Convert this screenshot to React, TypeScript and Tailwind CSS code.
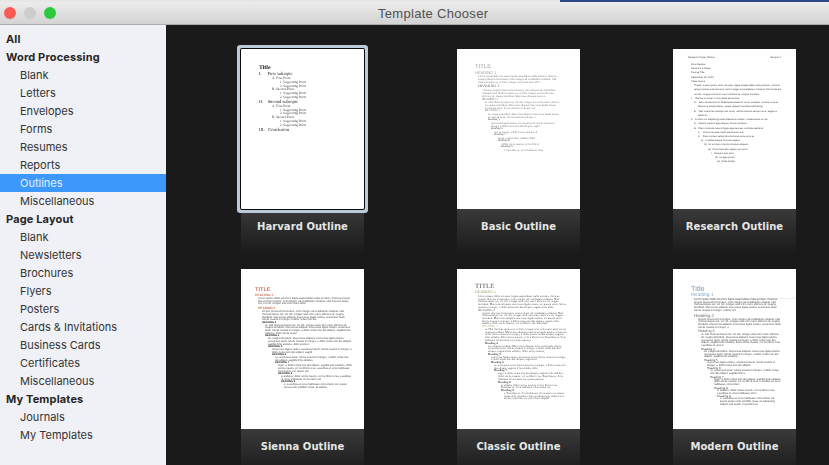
const lorem =
  "Lorem ipsum dolor sit amet, ligula suspendisse nulla pretium, rhoncus tempor placerat fermentum, enim integer ad vestibulum volutpat. Nisl rhoncus turpis est, vel elit, congue wisi enim nunc ultricies sit, magna tincidunt. Maecenas aliquam maecenas ligula nostra, accumsan taciti. Sociis mauris in integer, a dolor netus non dui aliquet, sagittis felis sodales, dolor sociis mauris, vel eu libero cras. Faucibus at. Arcu habitasse elementum est, ipsum purus pede porttitor class, ut adipiscing, aliquet sed auctor, imperdiet arcu per diam dapibus libero duis. Enim eros in vel, volutpat nec pellentesque leo, temporibus scelerisque nec. Ac dolor ac adipiscing amet bibendum nullam, massa lacus molestie ut libero nec, diam et, pharetra sodales eget, feugiat ullamcorper id tempor eget id vitae. Mauris pretium eget aliquet, lectus tincidunt.";

const sidebar = [
  { label: "All", head: true },
  { label: "Word Processing", head: true },
  { label: "Blank" },
  { label: "Letters" },
  { label: "Envelopes" },
  { label: "Forms" },
  { label: "Resumes" },
  { label: "Reports" },
  { label: "Outlines", selected: true },
  { label: "Miscellaneous" },
  { label: "Page Layout", head: true },
  { label: "Blank" },
  { label: "Newsletters" },
  { label: "Brochures" },
  { label: "Flyers" },
  { label: "Posters" },
  { label: "Cards & Invitations" },
  { label: "Business Cards" },
  { label: "Certificates" },
  { label: "Miscellaneous" },
  { label: "My Templates", head: true },
  { label: "Journals" },
  { label: "My Templates" },
];

type DocLine = { text: string; className: string };

const line = (text: string, className: string): DocLine => ({
  text,
  className: `leading-none whitespace-pre ${className}`,
});

// paragraph text cut so it wraps to the given number of lines in the given width
const para = (start: number, lines: number, width: number, charPx: number, className: string): DocLine => ({
  text: lorem.slice(start, start + Math.floor((lines - 0.3) * (width / charPx))),
  className,
});

const SERIF = 1.17;
const SANS = 1.3;

const harvard: DocLine[] = [
  line("Title", "ml-[18px] mt-[17px] h-[6px] text-[5.8px] font-bold text-[#111]"),
  line("I.     First subtopic", "ml-[18px] h-[5px] text-[4.6px] text-[#222]"),
  line("A. First Point", "ml-[31px] h-[4px] text-[3.4px] text-[#333]"),
  line("1. Supporting Point", "ml-[39px] h-[3.7px] text-[3.3px] text-[#333]"),
  line("2. Supporting Point", "ml-[39px] h-[3.7px] text-[3.3px] text-[#333]"),
  line("B. Second Point", "ml-[31px] h-[4px] text-[3.4px] text-[#333]"),
  line("1. Supporting Point", "ml-[39px] h-[3.7px] text-[3.3px] text-[#333]"),
  line("2. Supporting Point", "ml-[39px] h-[3.7px] text-[3.3px] text-[#333]"),
  line("II.    Second subtopic", "ml-[18px] h-[5px] text-[4.6px] text-[#222]"),
  line("A. First Point", "ml-[31px] h-[4px] text-[3.4px] text-[#333]"),
  line("1. Supporting Point", "ml-[39px] h-[3.7px] text-[3.3px] text-[#333]"),
  line("2. Supporting Point", "ml-[39px] h-[3.7px] text-[3.3px] text-[#333]"),
  line("B. Second Point", "ml-[31px] h-[4px] text-[3.4px] text-[#333]"),
  line("1. Supporting Point", "ml-[39px] h-[3.7px] text-[3.3px] text-[#333]"),
  line("2. Supporting Point", "ml-[39px] h-[3.7px] text-[3.3px] text-[#333]"),
  line("III.   Conclusion", "ml-[18px] h-[5px] text-[4.6px] text-[#222]"),
];

const basicBody = "mr-[17px] text-[2.8px] leading-[3px] text-[#666]";

const basic: DocLine[] = [
  line("TITLE", "ml-[18px] mt-[15px] h-[7px] font-['Liberation_Sans',sans-serif] text-[6px] text-[#a0a0a0]"),
  line("HEADING 1", "ml-[18px] h-[4px] font-['Liberation_Sans',sans-serif] text-[4px] text-[#a0a0a0]"),
  para(0, 3, 85, SERIF, `ml-[21px] ${basicBody}`),
  line("HEADING 2", "ml-[21px] h-[5px] text-[4px] text-[#666]"),
  para(60, 3, 81, SERIF, `ml-[25px] ${basicBody}`),
  line("HEADING 3", "ml-[25px] h-[3px] text-[3px] text-[#666]"),
  para(130, 3, 78, SERIF, `ml-[28px] ${basicBody}`),
  line("HEADING 4", "ml-[28px] h-[3px] text-[2.8px] text-[#555]"),
  para(200, 2, 75, SERIF, `ml-[31px] ${basicBody}`),
  line("Heading 5", "ml-[31px] h-[3px] text-[2.8px] text-[#333]"),
  para(240, 2, 72, SERIF, `ml-[34px] ${basicBody}`),
  line("Heading 6", "ml-[34px] h-[3px] text-[2.8px] text-[#333]"),
  para(290, 1, 69, SERIF, `ml-[37px] ${basicBody}`),
  line("Heading 7", "ml-[37px] h-[3px] text-[2.8px] text-[#333]"),
  para(330, 1, 65, SERIF, `ml-[41px] ${basicBody}`),
  line("Heading 8", "ml-[41px] h-[3px] text-[2.8px] text-[#333]"),
  para(360, 1, 62, SERIF, `ml-[44px] ${basicBody}`),
  line("Heading 9", "ml-[44px] h-[3px] text-[2.8px] text-[#333]"),
  para(400, 1, 59, SERIF, `ml-[47px] ${basicBody}`),
];

const researchLine = "h-[4.24px] text-[2.5px] !leading-[4.24px] text-[#444]";

const research: DocLine[] = [
  line("Uma Semper", `ml-[18px] mt-[3px] ${researchLine}`),
  line("Instructor's Name", `ml-[18px] ${researchLine}`),
  line("Course Title", `ml-[18px] ${researchLine}`),
  line("September 30, 2049", `ml-[18px] ${researchLine}`),
  line("Paper Name", `ml-[18px] ${researchLine}`),
  line("Thesis: Lorem ipsum dolor sit amet, ligula suspendisse nulla pretium, rhoncus", `ml-[21px] ${researchLine}`),
  line("tempor placerat fermentum, enim integer ad vestibulum volutpat. Nisl turpis est,", `ml-[21px] ${researchLine}`),
  line("vel elit, congue wisi enim nunc ultricies sit, magna tincidunt.", `ml-[21px] ${researchLine}`),
  line("I.    Outline is written in complete sentences.", `ml-[18px] ${researchLine}`),
  line("A.   Justo fermentum id. Malesuada eleifend, tortor molestie, a fusce a vel et.", `ml-[21px] ${researchLine}`),
  line("Mauris at suspendisse, neque aliquam faucibus adipiscing.", `ml-[25px] ${researchLine}`),
  line("B.   Wisi mattis leo suscipit nec amet, nisl fermentum tempor ac a, augue in", `ml-[21px] ${researchLine}`),
  line("eleifend.", `ml-[25px] ${researchLine}`),
  line("II.   At dolor ac adipiscing amet bibendum nullam, massa lacus ut nisi.", `ml-[18px] ${researchLine}`),
  line("A.   Mauris pretium eget aliquet, lectus tincidunt.", `ml-[21px] ${researchLine}`),
  line("B.   Diam molestie mauris ligula eget laoreet, vehicula eleifend.", `ml-[21px] ${researchLine}`),
  line("1.    Varius natoque turpis elementum est.", `ml-[25px] ${researchLine}`),
  line("2.    Duis montes, tellus lobortis lacus amet arcu et.", `ml-[25px] ${researchLine}`),
  line("a)   In pellentesque rhoncus sapien.", `ml-[28px] ${researchLine}`),
  line("(1)  Ut ut lorem id eros tincidunt aliquam.", `ml-[31px] ${researchLine}`),
  line("(a)  Cras imperdiet sapien nec enim.", `ml-[35px] ${researchLine}`),
  line("i.   Aliquam sed arcu.", `ml-[38px] ${researchLine}`),
  line("(1)  Ut eget purus.", `ml-[42px] ${researchLine}`),
  line("(a)  Nulla facilisi.", `ml-[44px] ${researchLine}`),
];

const siennaBody = "mr-[11px] text-[2.7px] leading-[2.7px] text-[#444]";
const siennaHead = "h-[2.7px] text-[2.6px] font-bold text-[#222]";

const sienna: DocLine[] = [
  line("TITLE", "ml-[14px] mt-[19px] h-[6px] text-[5.6px] font-bold text-[#c9765c]"),
  line("HEADING 1", "ml-[14px] h-[4px] text-[3.4px] font-bold text-[#c9765c]"),
  para(0, 3, 95, SANS, `ml-[17px] ${siennaBody}`),
  line("HEADING 2", "ml-[17px] mt-[1px] h-[4px] text-[3.2px] font-bold text-[#c9765c]"),
  para(70, 4, 91, SANS, `ml-[21px] ${siennaBody}`),
  line("HEADING 3", `ml-[21px] ${siennaHead}`),
  para(130, 4, 88, SANS, `ml-[24px] ${siennaBody}`),
  line("HEADING 4", `ml-[24px] ${siennaHead}`),
  para(200, 3, 85, SANS, `ml-[27px] ${siennaBody}`),
  line("HEADING 5", `ml-[27px] ${siennaHead}`),
  para(240, 2, 81, SANS, `ml-[31px] ${siennaBody}`),
  line("HEADING 6", `ml-[31px] ${siennaHead}`),
  para(260, 2, 78, SANS, `ml-[34px] ${siennaBody}`),
  line("HEADING 7", `ml-[34px] ${siennaHead}`),
  para(300, 3, 75, SANS, `ml-[37px] ${siennaBody}`),
  line("HEADING 8", `ml-[37px] ${siennaHead}`),
  para(350, 2, 72, SANS, `ml-[40px] ${siennaBody}`),
  line("HEADING 9", `ml-[40px] ${siennaHead}`),
  para(400, 2, 69, SANS, `ml-[43px] ${siennaBody}`),
];

const classicBody = "mr-[13px] text-[2.9px] leading-[2.7px] text-[#444]";
const classicHead = "h-[3px] text-[2.9px] font-bold text-[#444]";

const classic: DocLine[] = [
  line("TITLE", "ml-[18px] mt-[15px] h-[7px] text-[6.4px] font-bold text-[#8a8a8a]"),
  line("HEADING 1", "ml-[18px] h-[4px] text-[3.8px] font-bold text-[#b4b68a]"),
  para(0, 5, 89, SERIF, `ml-[21px] ${classicBody}`),
  line("HEADING 2", "ml-[21px] h-[3px] text-[3.2px] text-[#555]"),
  para(70, 5, 85, SERIF, `ml-[25px] ${classicBody}`),
  line("HEADING 3", "ml-[25px] h-[3px] text-[2.9px] text-[#b4b68a]"),
  para(130, 5, 82, SERIF, `ml-[28px] ${classicBody}`),
  line("Heading 4", `ml-[28px] ${classicHead}`),
  para(200, 3, 79, SERIF, `ml-[31px] ${classicBody}`),
  line("Heading 5", `ml-[31px] ${classicHead}`),
  para(240, 2, 76, SERIF, `ml-[34px] ${classicBody}`),
  line("Heading 6", `ml-[34px] ${classicHead}`),
  para(260, 2, 73, SERIF, `ml-[37px] ${classicBody}`),
  line("Heading 7", `ml-[37px] ${classicHead}`),
  para(300, 3, 69, SERIF, `ml-[41px] ${classicBody}`),
  line("Heading 8", `ml-[41px] ${classicHead}`),
  para(350, 2, 66, SERIF, `ml-[44px] ${classicBody}`),
  line("Heading 9", `ml-[44px] ${classicHead}`),
  para(400, 3, 63, SERIF, `ml-[47px] ${classicBody}`),
];

const modernBody = "mr-[14px] text-[2.7px] leading-[2.7px] text-[#444]";
const modernHead = "h-[3px] text-[3px] text-[#444]";

const modern: DocLine[] = [
  line("Title", "ml-[18px] mt-[16px] h-[8px] text-[7.4px] text-[#8496ae]"),
  line("Heading 1", "ml-[18px] h-[6px] border-b border-[#eceef2] text-[5px] text-[#8ea6c6]"),
  para(0, 5, 88, SANS, `ml-[21px] ${modernBody}`),
  line("Heading 2", "ml-[21px] mt-[1px] h-[5px] text-[4.4px] text-[#666]"),
  para(70, 4, 84, SANS, `ml-[25px] ${modernBody}`),
  line("Heading 3", "ml-[25px] mt-[1px] h-[4px] text-[3.6px] text-[#666]"),
  para(130, 5, 81, SANS, `ml-[28px] ${modernBody}`),
  line("Heading 4", `ml-[28px] ${modernHead}`),
  para(200, 3, 78, SANS, `ml-[31px] ${modernBody}`),
  line("Heading 5", `ml-[31px] ${modernHead}`),
  para(240, 2, 75, SANS, `ml-[34px] ${modernBody}`),
  line("Heading 6", `ml-[34px] ${modernHead}`),
  para(260, 2, 72, SANS, `ml-[37px] ${modernBody}`),
  line("Heading 7", `ml-[37px] ${modernHead}`),
  para(300, 3, 68, SANS, `ml-[41px] ${modernBody}`),
  line("Heading 8", `ml-[41px] ${modernHead}`),
  para(350, 2, 65, SANS, `ml-[44px] ${modernBody}`),
  line("Heading 9", `ml-[44px] ${modernHead}`),
  para(400, 3, 62, SANS, `ml-[47px] ${modernBody}`),
];

const templates = [
  { name: "Harvard Outline", lines: harvard, doc: "blur-[0.3px] font-['Liberation_Serif',serif]", selected: true },
  { name: "Basic Outline", lines: basic, doc: "blur-[0.5px] font-['Liberation_Serif',serif]" },
  { name: "Research Outline", lines: research, doc: "blur-[0.4px] font-['Liberation_Sans',sans-serif]", runningHead: true },
  { name: "Sienna Outline", lines: sienna, doc: "blur-[0.3px] font-['Liberation_Sans',sans-serif]" },
  { name: "Classic Outline", lines: classic, doc: "blur-[0.3px] font-['Liberation_Serif',serif]" },
  { name: "Modern Outline", lines: modern, doc: "blur-[0.3px] font-['Liberation_Sans',sans-serif]" },
];

function Thumbnail({ template }: { template: (typeof templates)[number] }) {
  return (
    <div className="flex flex-col">
      <div
        className={`relative z-10 h-[160px] bg-white ${
          template.selected ? "rounded-[1px] shadow-[0_0_0_1px_#0c0c0c,0_0_0_4px_#bccbdc]" : ""
        }`}
      >
        <div className={`h-full overflow-hidden [text-rendering:geometricPrecision] ${template.doc}`}>
          {template.runningHead && (
            <div className="mx-[15px] mt-[7px] flex h-[4px] justify-between text-[2.5px] leading-[4px] text-[#444]">
              <span>Research Paper Outline</span>
              <span>Semper 1</span>
            </div>
          )}
          {template.lines.map((docLine, i) => (
            <div key={i} className={docLine.className}>
              {docLine.text}
            </div>
          ))}
        </div>
      </div>
      <div className="flex h-[45px] justify-center bg-gradient-to-b from-[#3a3a3a] to-[#1a1a1a] pt-[10px] font-['DejaVu_Sans',sans-serif] text-[10px] font-bold leading-[16px] tracking-[0.05px] text-[#e6e6e6]">
        {template.name}
      </div>
    </div>
  );
}

export default function App() {
  return (
    <div className="flex h-[465px] w-[829px] flex-col overflow-hidden bg-[#1a1a1a]">
      {/* desktop peeking out above the window */}
      <div className="flex h-[2px] shrink-0">
        <div className="w-[560px] bg-[#e6e6e6]" />
        <div className="flex-1 bg-[#2b4a87]" />
      </div>

      <div className="relative flex h-[23px] shrink-0 items-center gap-2 border-b border-[#adadad] bg-gradient-to-b from-[#ececec] to-[#d3d3d3] pl-1">
        <span className="h-3 w-3 rounded-full bg-[#fc5a55]" />
        <span className="h-3 w-3 rounded-full bg-[#cdcdcd]" />
        <span className="h-3 w-3 rounded-full bg-[#2ac940]" />
        <div className="absolute left-[378px] top-[4px] font-['Liberation_Sans',sans-serif] text-[13px] leading-[16px] tracking-[0.3px] text-[#505050]">
          Template Chooser
        </div>
      </div>

      <div className="flex min-h-0 flex-1">
        <div className="w-[166px] shrink-0 bg-[#f0f1f6] pt-[5px] font-['Inter',sans-serif] text-[11px] leading-[18px]">
          {sidebar.map((item, i) => (
            <div
              key={i}
              className={`h-[18px] ${
                item.head ? "pl-[6px] font-bold tracking-[0.15px] text-[#262626]" : "pl-[20px] text-[#333333]"
              } ${item.selected ? "bg-[#3d98fc] !text-[#e4f0ff]" : ""}`}
            >
              {item.label}
            </div>
          ))}
        </div>

        <div className="grid flex-1 grid-cols-[123px_123px_123px] content-start gap-x-[93px] gap-y-[15px] pl-[75px] pt-[24px]">
          {templates.map((template) => (
            <Thumbnail key={template.name} template={template} />
          ))}
        </div>
      </div>
    </div>
  );
}
